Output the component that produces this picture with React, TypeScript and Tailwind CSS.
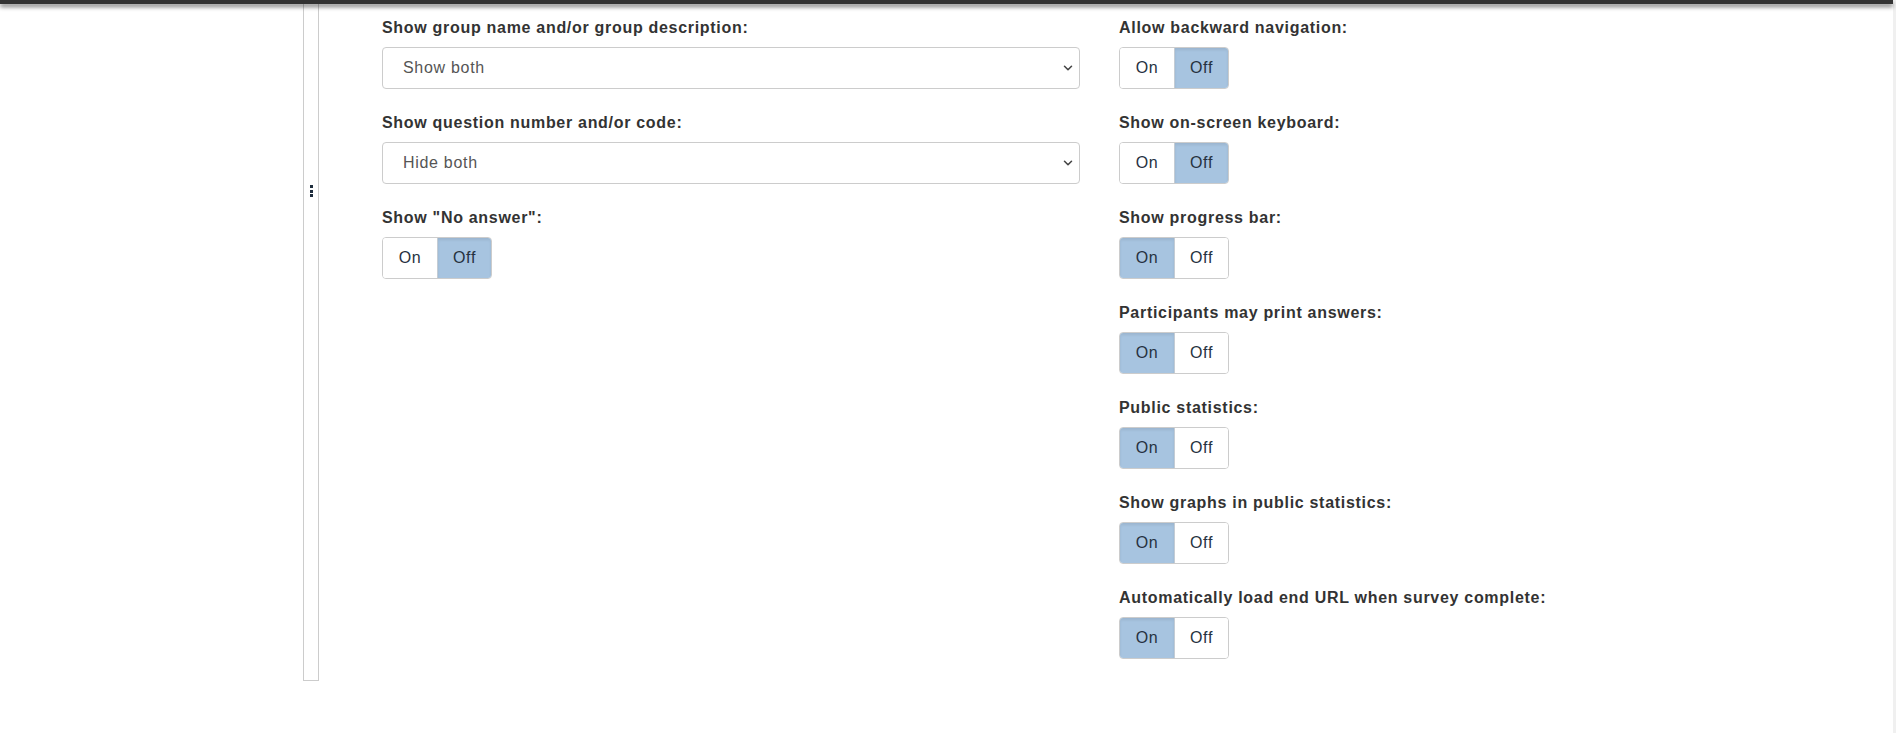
import { ChevronDown } from "lucide-react";

type Toggle = { label: string; on: boolean };

const leftSelects = [
  { label: "Show group name and/or group description:", value: "Show both" },
  { label: "Show question number and/or code:", value: "Hide both" },
];

const leftToggles: Toggle[] = [{ label: 'Show "No answer":', on: false }];

const rightToggles: Toggle[] = [
  { label: "Allow backward navigation:", on: false },
  { label: "Show on-screen keyboard:", on: false },
  { label: "Show progress bar:", on: true },
  { label: "Participants may print answers:", on: true },
  { label: "Public statistics:", on: true },
  { label: "Show graphs in public statistics:", on: true },
  { label: "Automatically load end URL when survey complete:", on: true },
];

function Label({ children }: { children: React.ReactNode }) {
  return <label className="block h-[21px] text-[16px] font-bold leading-[21px] tracking-[0.7px] text-[#333]">{children}</label>;
}

function SelectField({ label, value }: { label: string; value: string }) {
  return (
    <div className="mb-[23px]">
      <Label>{label}</Label>
      <div className="relative mt-[9px]">
        <select
          defaultValue={value}
          className="block h-[42px] w-full appearance-none rounded-[4px] border border-[#ccc] bg-white pl-[20px] text-[16px] tracking-[0.7px] text-[#555] outline-none"
        >
          <option>Show both</option>
          <option>Hide both</option>
        </select>
        <ChevronDown
          size={14}
          strokeWidth={2.6}
          className="pointer-events-none absolute right-[5px] top-[14px] text-[#444]"
          aria-hidden="true"
        />
      </div>
    </div>
  );
}

function OnOff({ label, on }: Toggle) {
  const active = "bg-[#a7c4e0] shadow-[inset_0_2px_3px_rgba(0,0,0,0.08)]";
  return (
    <div className="mb-[23px]">
      <Label>{label}</Label>
      <div className="mt-[9px] flex h-[42px] w-[110px] overflow-hidden rounded-[4px] border border-[#ccc] text-[16px] tracking-[0.7px] text-[#26323f]">
        <button type="button" className={`flex w-[54px] items-center justify-center ${on ? active : "bg-white"}`}>
          On
        </button>
        <button
          type="button"
          className={`flex flex-1 items-center justify-center border-l border-[#c4ccd4] ${on ? "bg-white" : active}`}
        >
          Off
        </button>
      </div>
    </div>
  );
}

export default function App() {
  return (
    <div className="flex h-[733px] w-full bg-white font-['Liberation_Sans',Arial,sans-serif]">
      <div className="flex flex-1 flex-col">
        <div className="relative z-10 h-[4px] bg-[#333] shadow-[0_3px_4px_rgba(0,0,0,0.5)]" />
        <div className="flex">
          <div className="w-[303px] shrink-0" />
          <div className="flex h-[677px] w-[16px] shrink-0 items-start justify-center border border-t-0 border-[#ccc] pt-[181px]">
            <div className="flex flex-col gap-[1.5px]">
              <span className="block h-[3px] w-[3px] bg-[#1e2d3d]" />
              <span className="block h-[3px] w-[3px] bg-[#1e2d3d]" />
              <span className="block h-[3px] w-[3px] bg-[#1e2d3d]" />
            </div>
          </div>
          <div className="ml-[63px] flex gap-[39px] pt-[13px]">
            <div className="w-[698px]">
              {leftSelects.map((s) => (
                <SelectField key={s.label} label={s.label} value={s.value} />
              ))}
              {leftToggles.map((t) => (
                <OnOff key={t.label} {...t} />
              ))}
            </div>
            <div className="w-[500px]">
              {rightToggles.map((t) => (
                <OnOff key={t.label} {...t} />
              ))}
            </div>
          </div>
        </div>
      </div>
      <div className="w-[3px] shrink-0 bg-[#f0f0f0]" />
    </div>
  );
}
